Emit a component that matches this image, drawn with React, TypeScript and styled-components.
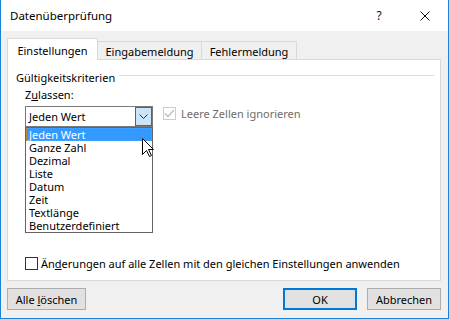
import React from "react";
import styled, { createGlobalStyle } from "styled-components";

const Global = createGlobalStyle`
  html, body { margin: 0; padding: 0; background: #fff; }
  body {
    font-family: "Segoe UI", "Noto Sans", "Liberation Sans", sans-serif;
    font-size: 11px;
    color: #000;
  }
  * { box-sizing: border-box; }
`;

const Window = styled.div`
  width: 449px;
  height: 319px;
  display: flex;
  flex-direction: column;
  border: 1px solid #1883d7;
  border-top: none;
  background: #f0f0f0;
  position: relative;
`;

const TitleBar = styled.div`
  height: 31px;
  flex-shrink: 0;
  background: #fff;
  display: flex;
  align-items: center;
  padding-left: 9px;
`;

const Title = styled.div`
  flex: 1;
  font-size: 11.5px;
`;

const CaptionButton = styled.div`
  width: 46px;
  height: 31px;
  display: flex;
  align-items: center;
  justify-content: center;
  font-size: 12px;
  color: #111;
`;

const Body = styled.div`
  flex: 1;
  display: flex;
  flex-direction: column;
  padding: 7px 7px 8px 6px;
`;

const TabStrip = styled.div`
  display: flex;
  align-items: flex-end;
  height: 21px;
  position: relative;
  z-index: 1;
`;

const Tab = styled.div<{ $active?: boolean; $w: number; $first?: boolean }>`
  width: ${(p) => p.$w}px;
  height: ${(p) => (p.$active ? 22 : 18)}px;
  margin-bottom: ${(p) => (p.$active ? -1 : 0)}px;
  margin-left: ${(p) => (p.$first ? 0 : -1)}px;
  border: 1px solid #d9d9d9;
  border-bottom: none;
  background: ${(p) => (p.$active ? "#fff" : "#f0f0f0")};
  position: relative;
  z-index: ${(p) => (p.$active ? 2 : 1)};
  display: flex;
  align-items: center;
  justify-content: center;
  padding-top: 2px;
  white-space: nowrap;
`;

const Panel = styled.div`
  height: 222px;
  flex-shrink: 0;
  background: #fff;
  border: 1px solid #d9d9d9;
  display: flex;
  flex-direction: column;
  padding: 9px 6px 9px 8px;
`;

const GroupHeader = styled.div`
  display: flex;
  align-items: center;
  height: 16px;
  gap: 4px;
`;

const GroupLine = styled.div`
  flex: 1;
  height: 1px;
  background: #dcdcdc;
  margin-top: -3px;
`;

const FieldLabel = styled.div`
  margin: 2px 0 0 9px;
  height: 16px;
  line-height: 16px;
`;

const U = styled.span`
  text-decoration: underline;
  text-underline-offset: 1px;
`;

const ControlRow = styled.div`
  display: flex;
  align-items: flex-start;
  margin: 3px 0 0 9px;
`;

const ComboWrap = styled.div`
  position: relative;
  width: 128px;
  height: 21px;
`;

const Combo = styled.div`
  width: 100%;
  height: 100%;
  border: 1px solid #7a7a7a;
  background: #fff;
  display: flex;
  align-items: center;
  padding-left: 3px;
`;

const ComboText = styled.div`
  flex: 1;
  white-space: nowrap;
`;

const DropButton = styled.div`
  width: 17px;
  height: 100%;
  background: #cce4f7;
  border: 1px solid #2c6fa8;
  display: flex;
  align-items: center;
  justify-content: center;
`;

const DropList = styled.div`
  position: absolute;
  left: 0;
  top: 21px;
  width: 128px;
  border: 1px solid #646464;
  background: #fff;
  z-index: 5;
`;

const ListItem = styled.div<{ $selected?: boolean }>`
  height: 13px;
  line-height: 13px;
  padding-left: 3px;
  white-space: nowrap;
  background: ${(p) => (p.$selected ? "#3399ff" : "#fff")};
  color: ${(p) => (p.$selected ? "#fff" : "#000")};
  outline: ${(p) => (p.$selected ? "1px dotted #c88a3c" : "none")};
  outline-offset: -1px;
`;

const Cursor = styled.svg`
  position: absolute;
  left: 116px;
  top: 10px;
  z-index: 6;
`;

const CheckRow = styled.div<{ $disabled?: boolean }>`
  display: flex;
  align-items: center;
  gap: ${(p) => (p.$disabled ? 5 : 3)}px;
  color: ${(p) => (p.$disabled ? "#6d6d6d" : "#000")};
  white-space: nowrap;
`;

const TopCheck = styled(CheckRow)`
  margin-left: 10px;
  height: 14px;
`;

const BottomCheck = styled(CheckRow)`
  margin: auto 0 0 9px;
  height: 16px;
`;

const Box = styled.div<{ $disabled?: boolean }>`
  width: 13px;
  height: 13px;
  border: 1px solid ${(p) => (p.$disabled ? "#cccccc" : "#333333")};
  background: #fff;
  display: flex;
  align-items: center;
  justify-content: center;
`;

const Footer = styled.div`
  display: flex;
  margin-top: 7px;
  height: 22px;
  gap: 10px;
`;

const Button = styled.div<{ $w: number; $default?: boolean }>`
  width: ${(p) => p.$w}px;
  height: 22px;
  background: #e1e1e1;
  border: ${(p) => (p.$default ? "2px solid #0078d7" : "1px solid #adadad")};
  display: flex;
  align-items: center;
  justify-content: center;
  white-space: nowrap;
`;

const Spacer = styled.div`
  flex: 1;
`;

export default function App() {
  const items = [
    "Jeden Wert",
    "Ganze Zahl",
    "Dezimal",
    "Liste",
    "Datum",
    "Zeit",
    "Textlänge",
    "Benutzerdefiniert",
  ];
  return (
    <>
      <Global />
      <Window>
        <TitleBar>
          <Title>Datenüberprüfung</Title>
          <CaptionButton>?</CaptionButton>
          <CaptionButton>
            <svg width="10" height="10" viewBox="0 0 10 10">
              <path d="M0.5 0.5 L9.5 9.5 M9.5 0.5 L0.5 9.5" stroke="#111" strokeWidth="1" fill="none" />
            </svg>
          </CaptionButton>
        </TitleBar>
        <Body>
          <TabStrip>
            <Tab $active $first $w={91}>Einstellungen</Tab>
            <Tab $w={105}>Eingabemeldung</Tab>
            <Tab $w={96}>Fehlermeldung</Tab>
          </TabStrip>
          <Panel>
            <GroupHeader>
              <span>Gültigkeitskriterien</span>
              <GroupLine />
            </GroupHeader>
            <FieldLabel>
              Z<U>u</U>lassen:
            </FieldLabel>
            <ControlRow>
              <ComboWrap>
                <Combo>
                  <ComboText>Jeden Wert</ComboText>
                  <DropButton>
                    <svg width="9" height="5" viewBox="0 0 9 5">
                      <path d="M0.5 0.5 L4.5 4.5 L8.5 0.5" stroke="#333" strokeWidth="1" fill="none" />
                    </svg>
                  </DropButton>
                </Combo>
                <DropList>
                  {items.map((it, i) => (
                    <ListItem key={it} $selected={i === 0}>
                      {it}
                    </ListItem>
                  ))}
                  <Cursor width="12" height="20" viewBox="0 0 12 20">
                    <path
                      d="M0.5 0.5 L0.5 16.5 L4.5 12.5 L7.5 18.5 L9.5 17.5 L6.5 11.5 L11.5 11.5 Z"
                      fill="#fff"
                      stroke="#000"
                      strokeWidth="1"
                      strokeLinejoin="miter"
                    />
                  </Cursor>
                </DropList>
              </ComboWrap>
              <TopCheck $disabled>
                <Box $disabled>
                  <svg width="11" height="9" viewBox="0 0 11 9">
                    <path d="M1 4.5 L4 7.5 L10 1" stroke="#bdbdbd" strokeWidth="1.3" fill="none" />
                  </svg>
                </Box>
                <span>Leere Zellen ignorieren</span>
              </TopCheck>
            </ControlRow>
            <BottomCheck>
              <Box />
              <span>
                Än<U>d</U>erungen auf alle Zellen mit den gleichen Einstellungen anwenden
              </span>
            </BottomCheck>
          </Panel>
          <Footer>
            <Button $w={79}>
              <span>
                Alle <U>l</U>öschen
              </span>
            </Button>
            <Spacer />
            <Button $w={74} $default>
              <span>OK</span>
            </Button>
            <Button $w={74}>
              <span>Abbrechen</span>
            </Button>
          </Footer>
        </Body>
      </Window>
    </>
  );
}
